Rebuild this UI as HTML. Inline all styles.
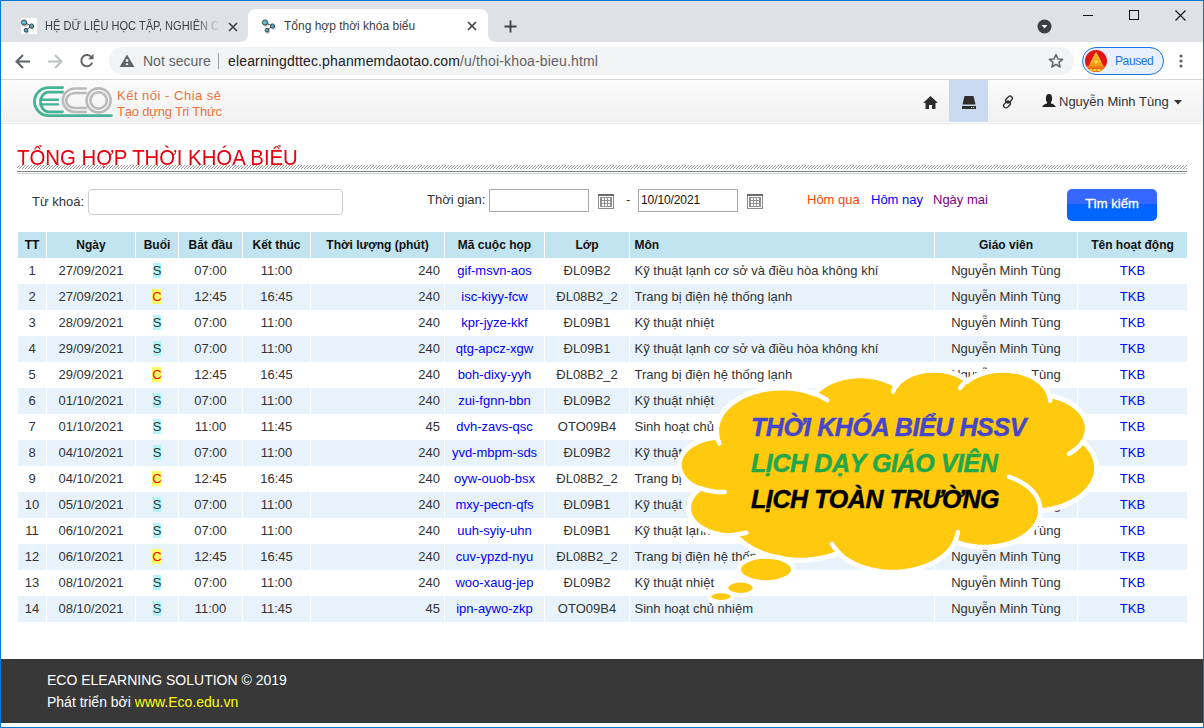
<!DOCTYPE html>
<html><head><meta charset="utf-8"><title>TKB</title>
<style>
*{box-sizing:border-box}
html,body{margin:0;padding:0}
body{width:1204px;height:728px;overflow:hidden;position:relative;background:#fff;font-family:"Liberation Sans",sans-serif;color:#333;font-size:13px}
.abs{position:absolute}
svg{position:absolute;overflow:visible}
#tabstrip{left:0;top:0;width:1204px;height:42px;background:#dee1e6}
#toolbar{left:0;top:42px;width:1204px;height:37px;background:#fff}
#tbline{left:0;top:79px;width:1204px;height:1px;background:#d9d9d9}
#omni{left:109px;top:47px;width:965px;height:28px;border-radius:14px;background:#f1f3f4}
.tabtxt{position:absolute;font-size:12px;color:#3c4043;white-space:nowrap;line-height:14px}
#navbar{left:0;top:80px;width:1204px;height:42px;background:linear-gradient(#fbfbfb,#f1f1f1)}
#navb2{left:0;top:123px;width:1204px;height:1px;background:#ececec}
.cell{position:absolute;top:0;height:26px;line-height:26px;text-align:center;white-space:nowrap;overflow:hidden;color:#333}
.row{position:absolute;left:18px;width:1169px;height:26px}
a{color:#00f;text-decoration:none}
.bs{background:#aef6fc;color:#333}
.bc{background:#ffff66;color:#f00}
#border{left:0;top:0;width:1204px;height:728px;border:1px solid #0078d4;pointer-events:none;z-index:50}
#footer{left:0;top:659px;width:1204px;height:64px;background:#383838;color:#fff;font-size:14px}
</style></head>
<body>

<div id="tabstrip" class="abs"></div>
<!-- inactive tab -->
<div class="abs" style="left:21px;top:18px;width:16px;height:16px;background:#fff"></div>
<svg style="left:21px;top:18px" width="16" height="16" viewBox="0 0 16 16">
 <g fill="#c8c8c8"><circle cx="4" cy="6" r="2.8"/><circle cx="11.5" cy="9.5" r="2.3"/><circle cx="6" cy="13.7" r="2.1"/></g>
 <path d="M3 4.5L10.5 8L5 12.2" stroke="#444" stroke-width="0.9" fill="none"/>
 <circle cx="3" cy="4.5" r="2.6" fill="#5cbcd2" stroke="#3a3a3a" stroke-width="0.9"/>
 <circle cx="10.5" cy="8" r="2.1" fill="#4aa8c0" stroke="#3a3a3a" stroke-width="0.9"/>
 <circle cx="5" cy="12.2" r="1.9" fill="#4aa8c0" stroke="#3a3a3a" stroke-width="0.9"/>
</svg>
<div class="abs" style="left:45px;top:19px;width:175px;height:16px;overflow:hidden;-webkit-mask-image:linear-gradient(90deg,#000 86%,transparent 100%)"><div class="tabtxt" style="left:0;top:0;transform:scaleX(0.92);transform-origin:0 0">HỆ DỮ LIỆU HỌC TẬP, NGHIÊN CỨU</div></div>
<svg style="left:228px;top:22px" width="10" height="10" viewBox="0 0 10 10"><path d="M1 1L9 9M9 1L1 9" stroke="#3c4043" stroke-width="1.6"/></svg>
<!-- active tab -->
<svg style="left:240px;top:9px" width="256" height="34" viewBox="0 0 256 34">
 <path d="M0 33 Q8 33 8 25 L8 8 Q8 0 16 0 L240 0 Q248 0 248 8 L248 25 Q248 33 256 33 L256 34 L0 34Z" fill="#fff"/>
</svg>
<svg style="left:262px;top:18px" width="16" height="16" viewBox="0 0 16 16">
 <g fill="#c8c8c8"><circle cx="4" cy="6" r="2.8"/><circle cx="11.5" cy="9.5" r="2.3"/><circle cx="6" cy="13.7" r="2.1"/></g>
 <path d="M3 4.5L10.5 8L5 12.2" stroke="#444" stroke-width="0.9" fill="none"/>
 <circle cx="3" cy="4.5" r="2.6" fill="#5cbcd2" stroke="#3a3a3a" stroke-width="0.9"/>
 <circle cx="10.5" cy="8" r="2.1" fill="#4aa8c0" stroke="#3a3a3a" stroke-width="0.9"/>
 <circle cx="5" cy="12.2" r="1.9" fill="#4aa8c0" stroke="#3a3a3a" stroke-width="0.9"/>
</svg>
<div class="tabtxt" style="left:284px;top:19px">Tổng hợp thời khóa biểu</div>
<svg style="left:467px;top:21px" width="10" height="10" viewBox="0 0 10 10"><path d="M1 1L9 9M9 1L1 9" stroke="#3c4043" stroke-width="1.6"/></svg>
<svg style="left:503.5px;top:19.5px" width="13" height="13" viewBox="0 0 13 13"><path d="M6.5 0.5V12.5M0.5 6.5H12.5" stroke="#3c4043" stroke-width="1.8"/></svg>
<!-- tab search -->
<svg style="left:1036.5px;top:18.5px" width="15" height="15" viewBox="0 0 15 15"><circle cx="7.5" cy="7.5" r="7" fill="#3c4043"/><path d="M4.5 6H10.5L7.5 9.5Z" fill="#fff"/></svg>
<!-- window controls -->
<div class="abs" style="left:1083px;top:15px;width:10px;height:1px;background:#111"></div>
<div class="abs" style="left:1129px;top:10px;width:10px;height:10px;border:1px solid #111"></div>
<svg style="left:1175px;top:10px" width="11" height="11" viewBox="0 0 11 11"><path d="M0.5 0.5L10.5 10.5M10.5 0.5L0.5 10.5" stroke="#111" stroke-width="1.1"/></svg>

<div id="toolbar" class="abs"></div>
<div id="tbline" class="abs"></div>
<svg style="left:15px;top:54px" width="16" height="15" viewBox="0 0 16 15"><path d="M15 7.5H2M8 1L1.5 7.5L8 14" stroke="#5f6368" stroke-width="2" fill="none"/></svg>
<svg style="left:47px;top:54px" width="16" height="15" viewBox="0 0 16 15"><path d="M1 7.5H14M8 1L14.5 7.5L8 14" stroke="#bdc1c6" stroke-width="2" fill="none"/></svg>
<svg style="left:79px;top:53px" width="16" height="16" viewBox="0 0 16 16"><path d="M13.2 9.5A5.6 5.6 0 1 1 11.8 3.6" stroke="#5f6368" stroke-width="2" fill="none"/><path d="M9 6.2H14.5V0.8Z" fill="#5f6368"/></svg>
<div id="omni" class="abs"></div>
<svg style="left:119px;top:54px" width="16" height="14" viewBox="0 0 16 14"><path d="M8 0.6L15.4 13H0.6Z" fill="#5f6368"/><rect x="6.8" y="5.2" width="2.4" height="2.6" fill="#f1f3f4"/><rect x="6.8" y="9.4" width="2.4" height="1.7" fill="#f1f3f4"/></svg>
<div class="abs" style="left:143px;top:53px;font-size:14px;color:#5f6368;line-height:17px">Not secure</div>
<div class="abs" style="left:218px;top:53px;width:1px;height:16px;background:#9aa0a6"></div>
<div class="abs" style="left:228px;top:53px;font-size:14px;letter-spacing:0.15px;color:#202124;line-height:17px;white-space:nowrap">elearningdttec.phanmemdaotao.com<span style="color:#5f6368">/u/thoi-khoa-bieu.html</span></div>
<svg style="left:1048px;top:53px" width="16" height="16" viewBox="0 0 16 16"><path d="M8 1.5L9.9 6L14.6 6.3L11 9.3L12.1 14L8 11.4L3.9 14L5 9.3L1.4 6.3L6.1 6Z" stroke="#5f6368" stroke-width="1.5" fill="none" stroke-linejoin="round"/></svg>
<div class="abs" style="left:1082px;top:47px;width:82px;height:28px;border-radius:14px;border:1.2px solid #1a73e8;background:#e8f0fe"></div>
<svg style="left:1085px;top:50px" width="22" height="22" viewBox="0 0 22 22"><defs><clipPath id="avc"><circle cx="11" cy="11" r="11"/></clipPath></defs><g clip-path="url(#avc)"><rect width="22" height="22" fill="#e31414"/><path d="M11 1.5L19 17H3Z" fill="#f49a1c"/><g stroke="#ffd23a" stroke-width="0.8"><path d="M11 3L6 13M11 3L16 13M8 8H14M6.5 11H15.5"/></g><circle cx="11" cy="12" r="1.6" fill="#ffe040"/><rect x="2" y="16" width="18" height="2.4" fill="#f07a14"/><rect x="3" y="18.6" width="16" height="3" fill="#f0a020"/><g fill="#ffe040"><rect x="5" y="19" width="1.5" height="2"/><rect x="9" y="19" width="1.5" height="2"/><rect x="13" y="19" width="1.5" height="2"/></g></g></svg>
<div class="abs" style="left:1115px;top:53px;font-size:12px;letter-spacing:-0.4px;color:#1a73e8;line-height:16px">Paused</div>
<svg style="left:1179px;top:54px" width="4" height="14" viewBox="0 0 4 14"><circle cx="2" cy="2" r="1.6" fill="#5f6368"/><circle cx="2" cy="7" r="1.6" fill="#5f6368"/><circle cx="2" cy="12" r="1.6" fill="#5f6368"/></svg>


<div id="navbar" class="abs"></div><div id="navb2" class="abs"></div>
<svg style="left:30px;top:84px" width="86" height="36" viewBox="0 0 86 36">
 <g fill="none" stroke="#45b394" stroke-linecap="round" stroke-width="2.8">
  <path d="M32.5 3.6 H18.5 A14 14 0 0 0 18.5 31.6 H81.4"/>
  <path d="M32.5 8.2 H18.5 A8 9.8 0 0 0 18.5 27.8 H32.5"/>
  <path d="M10.5 15.7 H28 M10.5 20.4 H28" stroke-width="2.4"/>
 </g>
 <g fill="none" stroke="#bababa" stroke-width="2.6">
  <path d="M55.7 4.5 H45 A12.2 11.75 0 0 0 45 28 H55.7" stroke-linecap="round"/>
  <path d="M55.7 9 H45 A8.9 7.5 0 0 0 45 24 H55.7" stroke-linecap="round"/>
  <circle cx="68.6" cy="16.4" r="12"/>
  <circle cx="68.6" cy="16.4" r="8.2"/>
 </g>
</svg>
<div class="abs" style="left:117px;top:88px;font-size:13px;color:#e8733c;line-height:15.8px;white-space:nowrap"><div style="letter-spacing:0.5px">Kết nối - Chia sẻ</div><div style="letter-spacing:-0.2px">Tạo dựng Tri Thức</div></div>
<svg style="left:923px;top:96px" width="15" height="13" viewBox="0 0 15 13"><path d="M7.5 0L15 7H12.5V13H9V9H6V13H2.5V7H0Z" fill="#2e2e2e"/></svg>
<div class="abs" style="left:949px;top:80px;width:39px;height:42px;background:#c9daf0"></div>
<svg style="left:962px;top:96px" width="14" height="13" viewBox="0 0 14 13"><path d="M2.5 0H11.5L13.5 8.5H0.5Z" fill="#2e2e2e"/><rect x="0" y="10" width="14" height="3" fill="#2e2e2e"/><rect x="9" y="11" width="1.2" height="1" fill="#ccc"/><rect x="11" y="11" width="1.2" height="1" fill="#ccc"/></svg>
<svg style="left:1001px;top:95px" width="14" height="14" viewBox="0 0 14 14"><g transform="rotate(-45 7 7)" fill="none" stroke="#222" stroke-width="1.3"><rect x="5.8" y="3.6" width="7.4" height="4.6" rx="2"/><rect x="0.8" y="5.8" width="7.4" height="4.6" rx="2"/></g></svg>
<svg style="left:1042px;top:94px" width="14" height="13" viewBox="0 0 14 13"><ellipse cx="7" cy="4.4" rx="3.1" ry="4.4" fill="#222"/><path d="M5.2 8H8.8L9 9.6Q11.8 10.2 12.8 11.4L14 13H0L1.2 11.4Q2.2 10.2 5 9.6Z" fill="#222"/></svg>
<div class="abs" style="left:1059px;top:94px;font-size:13px;color:#333;line-height:15px;white-space:nowrap">Nguyễn Minh Tùng</div>
<svg style="left:1174px;top:100px" width="8" height="5" viewBox="0 0 8 5"><path d="M0 0H8L4 4.5Z" fill="#333"/></svg>


<div class="abs" style="left:17px;top:144.5px;font-size:22.5px;color:#e8000e;line-height:26px;white-space:nowrap;transform:scaleX(0.905);transform-origin:0 0">TỔNG HỢP THỜI KHÓA BIỂU</div>
<svg style="left:17px;top:165px" width="1170" height="4" shape-rendering="crispEdges"><defs><pattern id="hp" patternUnits="userSpaceOnUse" width="3" height="3"><rect x="2" y="0" width="1" height="1" fill="#9a9a9a"/><rect x="1" y="1" width="1" height="1" fill="#9a9a9a"/><rect x="0" y="2" width="1" height="1" fill="#9a9a9a"/></pattern></defs><rect width="1170" height="4" fill="url(#hp)"/></svg>
<div class="abs" style="left:17px;top:171px;width:1170px;height:1px;background:#858585"></div>
<div class="abs" style="left:17px;top:173px;width:1170px;height:1px;background:#c9d5d5"></div>

<div class="abs" style="left:32px;top:194px;line-height:15px">Từ khoá:</div>
<div class="abs" style="left:88px;top:189px;width:255px;height:26px;border:1px solid #ccc;border-radius:4px;background:#fff"></div>
<div class="abs" style="left:427px;top:192px;line-height:15px">Thời gian:</div>
<div class="abs" style="left:489px;top:189px;width:100px;height:23px;border:1px solid #a9a9a9;background:#fff"></div>
<svg style="left:598px;top:194px" width="16" height="15" viewBox="0 0 16 15" shape-rendering="crispEdges"><rect x="0.5" y="0.5" width="15" height="14" fill="#fff" stroke="#8c8c8c"/><rect x="0" y="0" width="16" height="2" fill="#6a6a6a"/><rect x="2" y="3" width="12" height="10" fill="#909090"/><g fill="#fff"><rect x="4" y="4" width="2" height="2"/><rect x="7" y="4" width="2" height="2"/><rect x="10" y="4" width="2" height="2"/><rect x="4" y="7" width="2" height="2"/><rect x="7" y="7" width="2" height="2"/><rect x="10" y="7" width="2" height="2"/><rect x="4" y="10" width="2" height="2"/><rect x="7" y="10" width="2" height="2"/><rect x="10" y="10" width="2" height="2"/></g></svg>
<div class="abs" style="left:626px;top:192px;line-height:15px">-</div>
<div class="abs" style="left:638px;top:189px;width:100px;height:23px;border:1px solid #a9a9a9;background:#fff;padding-left:2px;line-height:21px;font-size:12px;letter-spacing:-0.1px;color:#111">10/10/2021</div>
<svg style="left:747px;top:194px" width="16" height="15" viewBox="0 0 16 15" shape-rendering="crispEdges"><rect x="0.5" y="0.5" width="15" height="14" fill="#fff" stroke="#8c8c8c"/><rect x="0" y="0" width="16" height="2" fill="#6a6a6a"/><rect x="2" y="3" width="12" height="10" fill="#909090"/><g fill="#fff"><rect x="4" y="4" width="2" height="2"/><rect x="7" y="4" width="2" height="2"/><rect x="10" y="4" width="2" height="2"/><rect x="4" y="7" width="2" height="2"/><rect x="7" y="7" width="2" height="2"/><rect x="10" y="7" width="2" height="2"/><rect x="4" y="10" width="2" height="2"/><rect x="7" y="10" width="2" height="2"/><rect x="10" y="10" width="2" height="2"/></g></svg>
<div class="abs" style="left:807px;top:192px;line-height:15px;color:#ff4500">Hôm qua</div>
<div class="abs" style="left:871px;top:192px;line-height:15px;color:#00f">Hôm nay</div>
<div class="abs" style="left:933px;top:192px;line-height:15px;color:#800080">Ngày mai</div>
<div class="abs" style="left:1067px;top:189px;width:90px;height:32px;border-radius:5px;background:linear-gradient(#3468ff 0,#3468ff 47%,#0264ff 47%,#0066ff 100%);color:#fff;text-align:center;line-height:29px;-webkit-text-stroke:0.3px #fff">Tìm kiếm</div>

<div class="row" style="top:232px">
<div class="cell" style="left:0px;width:28px;background:#c1e4f0;font-weight:bold;font-size:12px;color:#111">TT</div>
<div class="cell" style="left:29px;width:88px;background:#c1e4f0;font-weight:bold;font-size:12px;color:#111">Ngày</div>
<div class="cell" style="left:118px;width:42px;background:#c1e4f0;font-weight:bold;font-size:12px;color:#111">Buổi</div>
<div class="cell" style="left:161px;width:63px;background:#c1e4f0;font-weight:bold;font-size:12px;color:#111">Bắt đầu</div>
<div class="cell" style="left:225px;width:67px;background:#c1e4f0;font-weight:bold;font-size:12px;color:#111">Kết thúc</div>
<div class="cell" style="left:293px;width:133px;background:#c1e4f0;font-weight:bold;font-size:12px;color:#111">Thời lượng (phút)</div>
<div class="cell" style="left:427px;width:99px;background:#c1e4f0;font-weight:bold;font-size:12px;color:#111">Mã cuộc họp</div>
<div class="cell" style="left:527px;width:84px;background:#c1e4f0;font-weight:bold;font-size:12px;color:#111">Lớp</div>
<div class="cell" style="left:612px;width:304px;background:#c1e4f0;font-weight:bold;font-size:12px;color:#111;text-align:left;padding-left:4.5px">Môn</div>
<div class="cell" style="left:917px;width:142px;background:#c1e4f0;font-weight:bold;font-size:12px;color:#111">Giáo viên</div>
<div class="cell" style="left:1060px;width:109px;background:#c1e4f0;font-weight:bold;font-size:12px;color:#111">Tên hoạt động</div>
</div>
<div class="row" style="top:258px">
<div class="cell" style="left:0px;width:28px;background:#fff">1</div>
<div class="cell" style="left:29px;width:88px;background:#fff">27/09/2021</div>
<div class="cell" style="left:118px;width:42px;background:#fff"><span class="bs">S</span></div>
<div class="cell" style="left:161px;width:63px;background:#fff">07:00</div>
<div class="cell" style="left:225px;width:67px;background:#fff">11:00</div>
<div class="cell" style="left:293px;width:133px;background:#fff;text-align:right;padding-right:4px">240</div>
<div class="cell" style="left:427px;width:99px;background:#fff"><a>gif-msvn-aos</a></div>
<div class="cell" style="left:527px;width:84px;background:#fff">ĐL09B2</div>
<div class="cell" style="left:612px;width:304px;background:#fff;text-align:left;padding-left:4.5px">Kỹ thuật lạnh cơ sở và điều hòa không khí</div>
<div class="cell" style="left:917px;width:142px;background:#fff">Nguyễn Minh Tùng</div>
<div class="cell" style="left:1060px;width:109px;background:#fff"><a>TKB</a></div>
</div>
<div class="row" style="top:284px">
<div class="cell" style="left:0px;width:28px;background:#e7f2fb">2</div>
<div class="cell" style="left:29px;width:88px;background:#e7f2fb">27/09/2021</div>
<div class="cell" style="left:118px;width:42px;background:#e7f2fb"><span class="bc">C</span></div>
<div class="cell" style="left:161px;width:63px;background:#e7f2fb">12:45</div>
<div class="cell" style="left:225px;width:67px;background:#e7f2fb">16:45</div>
<div class="cell" style="left:293px;width:133px;background:#e7f2fb;text-align:right;padding-right:4px">240</div>
<div class="cell" style="left:427px;width:99px;background:#e7f2fb"><a>isc-kiyy-fcw</a></div>
<div class="cell" style="left:527px;width:84px;background:#e7f2fb">ĐL08B2_2</div>
<div class="cell" style="left:612px;width:304px;background:#e7f2fb;text-align:left;padding-left:4.5px">Trang bị điện hệ thống lạnh</div>
<div class="cell" style="left:917px;width:142px;background:#e7f2fb">Nguyễn Minh Tùng</div>
<div class="cell" style="left:1060px;width:109px;background:#e7f2fb"><a>TKB</a></div>
</div>
<div class="row" style="top:310px">
<div class="cell" style="left:0px;width:28px;background:#fff">3</div>
<div class="cell" style="left:29px;width:88px;background:#fff">28/09/2021</div>
<div class="cell" style="left:118px;width:42px;background:#fff"><span class="bs">S</span></div>
<div class="cell" style="left:161px;width:63px;background:#fff">07:00</div>
<div class="cell" style="left:225px;width:67px;background:#fff">11:00</div>
<div class="cell" style="left:293px;width:133px;background:#fff;text-align:right;padding-right:4px">240</div>
<div class="cell" style="left:427px;width:99px;background:#fff"><a>kpr-jyze-kkf</a></div>
<div class="cell" style="left:527px;width:84px;background:#fff">ĐL09B1</div>
<div class="cell" style="left:612px;width:304px;background:#fff;text-align:left;padding-left:4.5px">Kỹ thuật nhiệt</div>
<div class="cell" style="left:917px;width:142px;background:#fff">Nguyễn Minh Tùng</div>
<div class="cell" style="left:1060px;width:109px;background:#fff"><a>TKB</a></div>
</div>
<div class="row" style="top:336px">
<div class="cell" style="left:0px;width:28px;background:#e7f2fb">4</div>
<div class="cell" style="left:29px;width:88px;background:#e7f2fb">29/09/2021</div>
<div class="cell" style="left:118px;width:42px;background:#e7f2fb"><span class="bs">S</span></div>
<div class="cell" style="left:161px;width:63px;background:#e7f2fb">07:00</div>
<div class="cell" style="left:225px;width:67px;background:#e7f2fb">11:00</div>
<div class="cell" style="left:293px;width:133px;background:#e7f2fb;text-align:right;padding-right:4px">240</div>
<div class="cell" style="left:427px;width:99px;background:#e7f2fb"><a>qtg-apcz-xgw</a></div>
<div class="cell" style="left:527px;width:84px;background:#e7f2fb">ĐL09B1</div>
<div class="cell" style="left:612px;width:304px;background:#e7f2fb;text-align:left;padding-left:4.5px">Kỹ thuật lạnh cơ sở và điều hòa không khí</div>
<div class="cell" style="left:917px;width:142px;background:#e7f2fb">Nguyễn Minh Tùng</div>
<div class="cell" style="left:1060px;width:109px;background:#e7f2fb"><a>TKB</a></div>
</div>
<div class="row" style="top:362px">
<div class="cell" style="left:0px;width:28px;background:#fff">5</div>
<div class="cell" style="left:29px;width:88px;background:#fff">29/09/2021</div>
<div class="cell" style="left:118px;width:42px;background:#fff"><span class="bc">C</span></div>
<div class="cell" style="left:161px;width:63px;background:#fff">12:45</div>
<div class="cell" style="left:225px;width:67px;background:#fff">16:45</div>
<div class="cell" style="left:293px;width:133px;background:#fff;text-align:right;padding-right:4px">240</div>
<div class="cell" style="left:427px;width:99px;background:#fff"><a>boh-dixy-yyh</a></div>
<div class="cell" style="left:527px;width:84px;background:#fff">ĐL08B2_2</div>
<div class="cell" style="left:612px;width:304px;background:#fff;text-align:left;padding-left:4.5px">Trang bị điện hệ thống lạnh</div>
<div class="cell" style="left:917px;width:142px;background:#fff">Nguyễn Minh Tùng</div>
<div class="cell" style="left:1060px;width:109px;background:#fff"><a>TKB</a></div>
</div>
<div class="row" style="top:388px">
<div class="cell" style="left:0px;width:28px;background:#e7f2fb">6</div>
<div class="cell" style="left:29px;width:88px;background:#e7f2fb">01/10/2021</div>
<div class="cell" style="left:118px;width:42px;background:#e7f2fb"><span class="bs">S</span></div>
<div class="cell" style="left:161px;width:63px;background:#e7f2fb">07:00</div>
<div class="cell" style="left:225px;width:67px;background:#e7f2fb">11:00</div>
<div class="cell" style="left:293px;width:133px;background:#e7f2fb;text-align:right;padding-right:4px">240</div>
<div class="cell" style="left:427px;width:99px;background:#e7f2fb"><a>zui-fgnn-bbn</a></div>
<div class="cell" style="left:527px;width:84px;background:#e7f2fb">ĐL09B2</div>
<div class="cell" style="left:612px;width:304px;background:#e7f2fb;text-align:left;padding-left:4.5px">Kỹ thuật nhiệt</div>
<div class="cell" style="left:917px;width:142px;background:#e7f2fb">Nguyễn Minh Tùng</div>
<div class="cell" style="left:1060px;width:109px;background:#e7f2fb"><a>TKB</a></div>
</div>
<div class="row" style="top:414px">
<div class="cell" style="left:0px;width:28px;background:#fff">7</div>
<div class="cell" style="left:29px;width:88px;background:#fff">01/10/2021</div>
<div class="cell" style="left:118px;width:42px;background:#fff"><span class="bs">S</span></div>
<div class="cell" style="left:161px;width:63px;background:#fff">11:00</div>
<div class="cell" style="left:225px;width:67px;background:#fff">11:45</div>
<div class="cell" style="left:293px;width:133px;background:#fff;text-align:right;padding-right:4px">45</div>
<div class="cell" style="left:427px;width:99px;background:#fff"><a>dvh-zavs-qsc</a></div>
<div class="cell" style="left:527px;width:84px;background:#fff">OTO09B4</div>
<div class="cell" style="left:612px;width:304px;background:#fff;text-align:left;padding-left:4.5px">Sinh hoạt chủ nhiệm</div>
<div class="cell" style="left:917px;width:142px;background:#fff">Nguyễn Minh Tùng</div>
<div class="cell" style="left:1060px;width:109px;background:#fff"><a>TKB</a></div>
</div>
<div class="row" style="top:440px">
<div class="cell" style="left:0px;width:28px;background:#e7f2fb">8</div>
<div class="cell" style="left:29px;width:88px;background:#e7f2fb">04/10/2021</div>
<div class="cell" style="left:118px;width:42px;background:#e7f2fb"><span class="bs">S</span></div>
<div class="cell" style="left:161px;width:63px;background:#e7f2fb">07:00</div>
<div class="cell" style="left:225px;width:67px;background:#e7f2fb">11:00</div>
<div class="cell" style="left:293px;width:133px;background:#e7f2fb;text-align:right;padding-right:4px">240</div>
<div class="cell" style="left:427px;width:99px;background:#e7f2fb"><a>yvd-mbpm-sds</a></div>
<div class="cell" style="left:527px;width:84px;background:#e7f2fb">ĐL09B2</div>
<div class="cell" style="left:612px;width:304px;background:#e7f2fb;text-align:left;padding-left:4.5px">Kỹ thuật nhiệt</div>
<div class="cell" style="left:917px;width:142px;background:#e7f2fb">Nguyễn Minh Tùng</div>
<div class="cell" style="left:1060px;width:109px;background:#e7f2fb"><a>TKB</a></div>
</div>
<div class="row" style="top:466px">
<div class="cell" style="left:0px;width:28px;background:#fff">9</div>
<div class="cell" style="left:29px;width:88px;background:#fff">04/10/2021</div>
<div class="cell" style="left:118px;width:42px;background:#fff"><span class="bc">C</span></div>
<div class="cell" style="left:161px;width:63px;background:#fff">12:45</div>
<div class="cell" style="left:225px;width:67px;background:#fff">16:45</div>
<div class="cell" style="left:293px;width:133px;background:#fff;text-align:right;padding-right:4px">240</div>
<div class="cell" style="left:427px;width:99px;background:#fff"><a>oyw-ouob-bsx</a></div>
<div class="cell" style="left:527px;width:84px;background:#fff">ĐL08B2_2</div>
<div class="cell" style="left:612px;width:304px;background:#fff;text-align:left;padding-left:4.5px">Trang bị điện hệ thống lạnh</div>
<div class="cell" style="left:917px;width:142px;background:#fff">Nguyễn Minh Tùng</div>
<div class="cell" style="left:1060px;width:109px;background:#fff"><a>TKB</a></div>
</div>
<div class="row" style="top:492px">
<div class="cell" style="left:0px;width:28px;background:#e7f2fb">10</div>
<div class="cell" style="left:29px;width:88px;background:#e7f2fb">05/10/2021</div>
<div class="cell" style="left:118px;width:42px;background:#e7f2fb"><span class="bs">S</span></div>
<div class="cell" style="left:161px;width:63px;background:#e7f2fb">07:00</div>
<div class="cell" style="left:225px;width:67px;background:#e7f2fb">11:00</div>
<div class="cell" style="left:293px;width:133px;background:#e7f2fb;text-align:right;padding-right:4px">240</div>
<div class="cell" style="left:427px;width:99px;background:#e7f2fb"><a>mxy-pecn-qfs</a></div>
<div class="cell" style="left:527px;width:84px;background:#e7f2fb">ĐL09B1</div>
<div class="cell" style="left:612px;width:304px;background:#e7f2fb;text-align:left;padding-left:4.5px">Kỹ thuật nhiệt</div>
<div class="cell" style="left:917px;width:142px;background:#e7f2fb">Nguyễn Minh Tùng</div>
<div class="cell" style="left:1060px;width:109px;background:#e7f2fb"><a>TKB</a></div>
</div>
<div class="row" style="top:518px">
<div class="cell" style="left:0px;width:28px;background:#fff">11</div>
<div class="cell" style="left:29px;width:88px;background:#fff">06/10/2021</div>
<div class="cell" style="left:118px;width:42px;background:#fff"><span class="bs">S</span></div>
<div class="cell" style="left:161px;width:63px;background:#fff">07:00</div>
<div class="cell" style="left:225px;width:67px;background:#fff">11:00</div>
<div class="cell" style="left:293px;width:133px;background:#fff;text-align:right;padding-right:4px">240</div>
<div class="cell" style="left:427px;width:99px;background:#fff"><a>uuh-syiy-uhn</a></div>
<div class="cell" style="left:527px;width:84px;background:#fff">ĐL09B1</div>
<div class="cell" style="left:612px;width:304px;background:#fff;text-align:left;padding-left:4.5px">Kỹ thuật lạnh cơ sở và điều hòa không khí</div>
<div class="cell" style="left:917px;width:142px;background:#fff">Nguyễn Minh Tùng</div>
<div class="cell" style="left:1060px;width:109px;background:#fff"><a>TKB</a></div>
</div>
<div class="row" style="top:544px">
<div class="cell" style="left:0px;width:28px;background:#e7f2fb">12</div>
<div class="cell" style="left:29px;width:88px;background:#e7f2fb">06/10/2021</div>
<div class="cell" style="left:118px;width:42px;background:#e7f2fb"><span class="bc">C</span></div>
<div class="cell" style="left:161px;width:63px;background:#e7f2fb">12:45</div>
<div class="cell" style="left:225px;width:67px;background:#e7f2fb">16:45</div>
<div class="cell" style="left:293px;width:133px;background:#e7f2fb;text-align:right;padding-right:4px">240</div>
<div class="cell" style="left:427px;width:99px;background:#e7f2fb"><a>cuv-ypzd-nyu</a></div>
<div class="cell" style="left:527px;width:84px;background:#e7f2fb">ĐL08B2_2</div>
<div class="cell" style="left:612px;width:304px;background:#e7f2fb;text-align:left;padding-left:4.5px">Trang bị điện hệ thống lạnh</div>
<div class="cell" style="left:917px;width:142px;background:#e7f2fb">Nguyễn Minh Tùng</div>
<div class="cell" style="left:1060px;width:109px;background:#e7f2fb"><a>TKB</a></div>
</div>
<div class="row" style="top:570px">
<div class="cell" style="left:0px;width:28px;background:#fff">13</div>
<div class="cell" style="left:29px;width:88px;background:#fff">08/10/2021</div>
<div class="cell" style="left:118px;width:42px;background:#fff"><span class="bs">S</span></div>
<div class="cell" style="left:161px;width:63px;background:#fff">07:00</div>
<div class="cell" style="left:225px;width:67px;background:#fff">11:00</div>
<div class="cell" style="left:293px;width:133px;background:#fff;text-align:right;padding-right:4px">240</div>
<div class="cell" style="left:427px;width:99px;background:#fff"><a>woo-xaug-jep</a></div>
<div class="cell" style="left:527px;width:84px;background:#fff">ĐL09B2</div>
<div class="cell" style="left:612px;width:304px;background:#fff;text-align:left;padding-left:4.5px">Kỹ thuật nhiệt</div>
<div class="cell" style="left:917px;width:142px;background:#fff">Nguyễn Minh Tùng</div>
<div class="cell" style="left:1060px;width:109px;background:#fff"><a>TKB</a></div>
</div>
<div class="row" style="top:596px">
<div class="cell" style="left:0px;width:28px;background:#e7f2fb">14</div>
<div class="cell" style="left:29px;width:88px;background:#e7f2fb">08/10/2021</div>
<div class="cell" style="left:118px;width:42px;background:#e7f2fb"><span class="bs">S</span></div>
<div class="cell" style="left:161px;width:63px;background:#e7f2fb">11:00</div>
<div class="cell" style="left:225px;width:67px;background:#e7f2fb">11:45</div>
<div class="cell" style="left:293px;width:133px;background:#e7f2fb;text-align:right;padding-right:4px">45</div>
<div class="cell" style="left:427px;width:99px;background:#e7f2fb"><a>ipn-aywo-zkp</a></div>
<div class="cell" style="left:527px;width:84px;background:#e7f2fb">OTO09B4</div>
<div class="cell" style="left:612px;width:304px;background:#e7f2fb;text-align:left;padding-left:4.5px">Sinh hoạt chủ nhiệm</div>
<div class="cell" style="left:917px;width:142px;background:#e7f2fb">Nguyễn Minh Tùng</div>
<div class="cell" style="left:1060px;width:109px;background:#e7f2fb"><a>TKB</a></div>
</div>

<div id="footer" class="abs">
 <div class="abs" style="left:47px;top:13px;line-height:17px;white-space:nowrap">ECO ELEARNING SOLUTION © 2019</div>
 <div class="abs" style="left:47px;top:35px;line-height:17px;white-space:nowrap">Phát triển bởi <span style="color:#ffff00">www.Eco.edu.vn</span></div>
</div>


<svg style="left:0;top:0" width="1204" height="728">
 <path d="M717.15,436.69 L716.62,432.87 716.61,429.02 717.13,425.20 718.16,421.42 719.70,417.71 721.73,414.11 724.25,410.64 727.22,407.34 730.63,404.22 734.45,401.32 738.65,398.66 743.19,396.25 748.04,394.12 753.16,392.28 758.50,390.75 764.04,389.54 769.71,388.67 775.48,388.13 781.30,387.93 787.13,388.08 792.91,388.57 798.60,389.39 804.16,390.55 809.53,392.03 814.69,393.82 817.00,391.23 819.66,388.79 822.63,386.50 825.89,384.40 829.42,382.50 833.20,380.82 837.18,379.35 841.35,378.13 845.66,377.16 850.09,376.44 854.59,375.98 859.14,375.79 863.70,375.87 868.22,376.21 872.69,376.81 877.06,377.67 881.29,378.78 885.36,380.14 889.23,381.73 892.88,383.53 896.26,385.55 898.06,383.41 900.15,381.38 902.49,379.48 905.08,377.72 907.89,376.12 910.90,374.69 914.10,373.44 917.45,372.38 920.92,371.52 924.50,370.87 928.15,370.42 931.85,370.19 935.56,370.18 939.26,370.38 942.92,370.79 946.51,371.42 950.00,372.25 953.37,373.28 956.59,374.50 959.63,375.91 962.47,377.48 965.09,379.22 967.47,381.10 970.35,379.06 973.51,377.19 976.90,375.53 980.51,374.07 984.30,372.83 988.25,371.82 992.33,371.05 996.49,370.52 1000.70,370.25 1004.94,370.22 1009.17,370.45 1013.34,370.93 1017.43,371.65 1021.41,372.61 1025.24,373.81 1028.88,375.23 1032.32,376.86 1035.52,378.68 1038.46,380.69 1041.11,382.87 1043.45,385.19 1045.46,387.64 1047.13,390.20 1048.44,392.86 1049.38,395.57 1053.79,396.51 1058.05,397.70 1062.13,399.15 1066.01,400.82 1069.63,402.73 1072.99,404.84 1076.04,407.14 1078.77,409.61 1081.15,412.23 1083.17,414.99 1084.80,417.85 1086.03,420.80 1086.86,423.81 1087.28,426.86 1087.28,429.92 1086.86,432.97 1086.03,435.98 1084.80,438.93 1083.16,441.79 1086.55,444.99 1089.49,448.38 1091.95,451.93 1093.92,455.62 1095.37,459.40 1096.29,463.26 1096.68,467.15 1096.54,471.06 1095.86,474.94 1094.65,478.76 1092.92,482.49 1090.68,486.11 1087.96,489.58 1084.77,492.87 1081.15,495.95 1077.11,498.81 1072.70,501.42 1067.96,503.75 1062.91,505.79 1057.60,507.52 1052.07,508.93 1046.37,510.00 1040.56,510.73 1040.30,513.97 1039.61,517.19 1038.49,520.35 1036.95,523.44 1035.00,526.43 1032.66,529.29 1029.95,532.00 1026.88,534.55 1023.49,536.91 1019.79,539.06 1015.82,540.98 1011.60,542.67 1007.18,544.11 1002.58,545.28 997.84,546.19 993.00,546.81 988.09,547.15 983.16,547.20 978.24,546.97 973.37,546.45 968.59,545.65 963.93,544.58 959.44,543.23 955.14,541.64 953.19,545.31 950.74,548.84 947.81,552.22 944.44,555.41 940.65,558.38 936.46,561.12 931.92,563.60 927.06,565.79 921.92,567.69 916.54,569.27 910.97,570.52 905.25,571.44 899.43,572.01 893.56,572.23 887.67,572.11 881.83,571.63 876.08,570.80 870.47,569.64 865.03,568.14 859.82,566.33 854.89,564.21 850.26,561.81 845.97,559.14 842.07,556.23 838.58,553.10 832.79,555.17 826.75,556.91 820.49,558.28 814.08,559.28 807.56,559.90 800.99,560.14 794.40,559.99 787.86,559.46 781.42,558.55 775.13,557.27 769.03,555.62 763.17,553.63 757.60,551.30 752.37,548.65 747.51,545.71 743.06,542.50 739.06,539.04 735.53,535.35 731.74,535.53 727.94,535.49 724.16,535.21 720.43,534.72 716.79,534.00 713.26,533.08 709.87,531.94 706.65,530.61 703.63,529.10 700.82,527.41 698.26,525.56 695.97,523.57 693.96,521.45 692.24,519.22 690.84,516.89 689.77,514.49 689.02,512.04 688.62,509.56 688.56,507.06 688.84,504.56 689.47,502.10 690.43,499.68 691.72,497.33 693.32,495.06 695.23,492.90 697.43,490.86 699.90,488.96 696.75,487.61 693.79,486.07 691.05,484.37 688.55,482.51 686.31,480.51 684.36,478.38 682.69,476.15 681.34,473.83 680.30,471.43 679.59,468.99 679.22,466.51 679.18,464.02 679.48,461.54 680.11,459.08 681.07,456.68 682.35,454.33 683.94,452.08 685.83,449.93 688.00,447.90 690.44,446.00 693.13,444.26 696.04,442.68 699.15,441.29 702.43,440.08 705.87,439.07 709.43,438.27 713.08,437.69 716.79,437.32 Z" fill="#ffc90e" stroke="#fff" stroke-width="5"/>
 <path d="M724.80,491.90 L721.62,491.99 718.44,491.91 715.27,491.67 712.14,491.28 709.07,490.73 706.07,490.02 703.16,489.17 700.35,488.17 M746.37,532.69 L745.08,533.01 743.77,533.30 742.45,533.57 741.11,533.81 739.77,534.02 738.41,534.20 737.05,534.35 735.68,534.47 M838.56,552.28 L837.61,551.32 836.70,550.34 835.83,549.34 835.01,548.33 834.22,547.30 833.48,546.26 832.77,545.21 832.11,544.15 M957.76,531.99 L957.60,533.13 957.39,534.26 957.13,535.38 956.83,536.50 956.49,537.62 956.10,538.73 955.66,539.83 955.19,540.92 M1008.94,476.83 L1013.53,478.49 1017.87,480.42 1021.92,482.61 1025.63,485.03 1028.99,487.68 1031.95,490.53 1034.50,493.54 1036.60,496.70 1038.25,499.97 1039.43,503.33 1040.12,506.75 1040.32,510.20 M1082.97,441.29 L1081.72,443.07 1080.32,444.80 1078.77,446.47 1077.08,448.08 1075.25,449.63 1073.28,451.10 1071.20,452.49 1068.99,453.81 M1049.43,394.87 L1049.62,395.60 1049.78,396.34 1049.91,397.08 1050.02,397.81 1050.10,398.55 1050.15,399.30 1050.17,400.04 1050.17,400.78 M960.18,387.98 L960.89,386.97 961.66,385.97 962.48,385.00 963.35,384.04 964.27,383.11 965.25,382.19 966.27,381.31 967.34,380.44 M893.22,391.57 L893.52,390.73 893.86,389.90 894.23,389.07 894.65,388.25 895.10,387.44 895.59,386.64 896.12,385.85 896.69,385.07 M814.64,393.78 L816.33,394.45 817.99,395.16 819.61,395.90 821.20,396.68 822.76,397.48 824.27,398.32 825.75,399.19 827.19,400.08 M719.34,443.33 L718.98,442.51 718.64,441.69 718.33,440.87 718.04,440.04 717.78,439.21 717.55,438.37 717.33,437.54 717.15,436.69" fill="none" stroke="#fff" stroke-width="4.5" stroke-linecap="round"/>
 <ellipse cx="766" cy="569.5" rx="27.5" ry="13.2" fill="#ffc90e" stroke="#fff" stroke-width="5"/>
 <ellipse cx="740.5" cy="587.8" rx="14.3" ry="7.2" fill="#ffc90e" stroke="#fff" stroke-width="4"/>
 <ellipse cx="721" cy="596.6" rx="11.8" ry="5.4" fill="#ffc90e" stroke="#fff" stroke-width="4"/>
</svg>
<div class="abs" style="left:751px;top:409px;letter-spacing:-0.4px;font-size:25px;font-weight:bold;font-style:italic;line-height:36px;white-space:nowrap">
<div style="color:#4646cc;-webkit-text-stroke:0.45px #4646cc">THỜI KHÓA BIỂU HSSV</div>
<div style="color:#22a84a;-webkit-text-stroke:0.45px #22a84a">LỊCH DẠY GIÁO VIÊN</div>
<div style="color:#000;-webkit-text-stroke:0.45px #000">LỊCH TOÀN TRƯỜNG</div>
</div>

<div id="border" class="abs"></div>
</body></html>
